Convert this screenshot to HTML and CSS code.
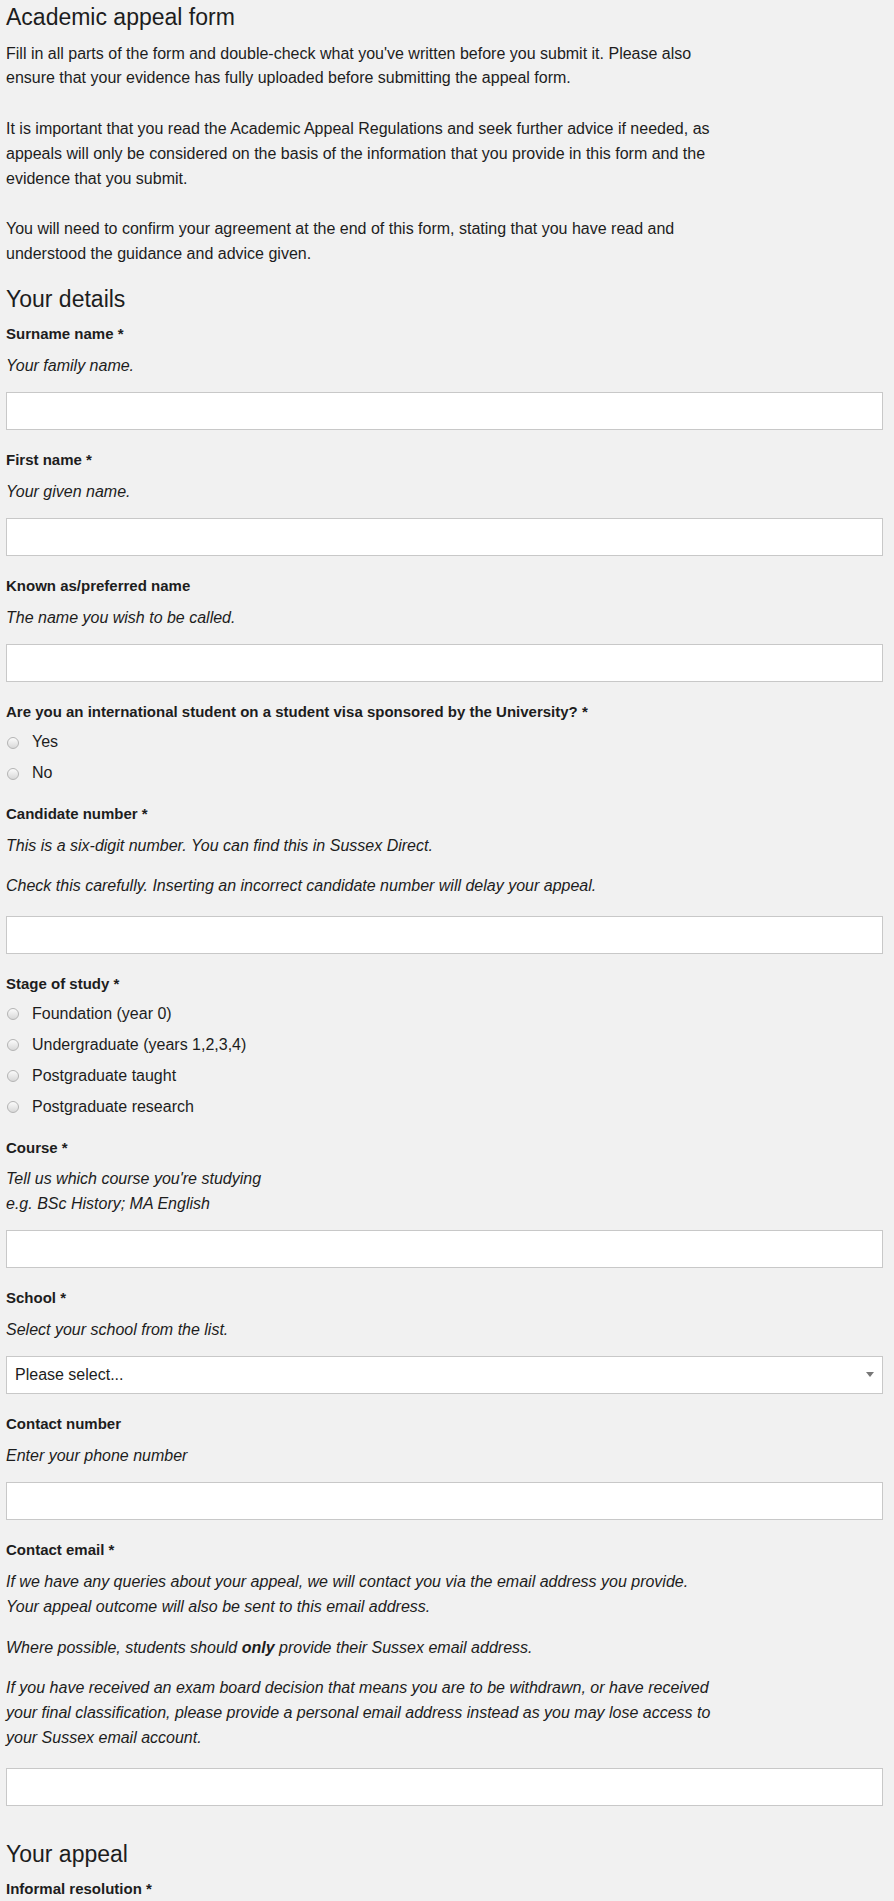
FILE: index.html
```html
<!DOCTYPE html>
<html lang="en">
<head>
  <meta charset="UTF-8">
  <meta name="viewport" content="width=device-width, initial-scale=1.0">
  <title>Academic appeal form</title>
  <link rel="stylesheet" href="styles.css">
</head>
<body>
  <div class="page">
    <h1 class="page-title">Academic appeal form</h1>

    <div class="intro">
      <p>Fill in all parts of the form and double-check what you've written before you submit it. Please also ensure that your evidence has fully uploaded before submitting the appeal form.</p>
      <p>It is important that you read the Academic Appeal Regulations and seek further advice if needed, as appeals will only be considered on the basis of the information that you provide in this form and the evidence that you submit.</p>
      <p>You will need to confirm your agreement at the end of this form, stating that you have read and understood the guidance and advice given.</p>
    </div>

    <section class="form-section">
      <h2 class="section-title">Your details</h2>

      <div class="field">
        <label class="field-label" for="surname">Surname name *</label>
        <p class="hint">Your family name.</p>
        <input class="text-input" type="text" id="surname">
      </div>

      <div class="field">
        <label class="field-label" for="firstname">First name *</label>
        <p class="hint">Your given name.</p>
        <input class="text-input" type="text" id="firstname">
      </div>

      <div class="field">
        <label class="field-label" for="knownas">Known as/preferred name</label>
        <p class="hint">The name you wish to be called.</p>
        <input class="text-input" type="text" id="knownas">
      </div>

      <div class="field field--choice">
        <span class="field-label">Are you an international student on a student visa sponsored by the University? *</span>
        <div class="options">
          <label class="option"><input type="radio" name="visa"> Yes</label>
          <label class="option"><input type="radio" name="visa"> No</label>
        </div>
      </div>

      <div class="field">
        <label class="field-label" for="candidate">Candidate number *</label>
        <div class="hints">
          <p>This is a six-digit number. You can find this in Sussex Direct.</p>
          <p>Check this carefully. Inserting an incorrect candidate number will delay your appeal.</p>
        </div>
        <input class="text-input" type="text" id="candidate">
      </div>

      <div class="field field--choice">
        <span class="field-label">Stage of study *</span>
        <div class="options">
          <label class="option"><input type="radio" name="stage"> Foundation (year 0)</label>
          <label class="option"><input type="radio" name="stage"> Undergraduate (years 1,2,3,4)</label>
          <label class="option"><input type="radio" name="stage"> Postgraduate taught</label>
          <label class="option"><input type="radio" name="stage"> Postgraduate research</label>
        </div>
      </div>

      <div class="field">
        <label class="field-label" for="course">Course *</label>
        <p class="hint">Tell us which course you're studying<br>e.g. BSc History; MA English</p>
        <input class="text-input" type="text" id="course">
      </div>

      <div class="field">
        <label class="field-label" for="school">School *</label>
        <p class="hint">Select your school from the list.</p>
        <div class="select-wrap">
          <select class="text-input select-input" id="school">
            <option>Please select...</option>
          </select>
        </div>
      </div>

      <div class="field">
        <label class="field-label" for="phone">Contact number</label>
        <p class="hint">Enter your phone number</p>
        <input class="text-input" type="text" id="phone">
      </div>

      <div class="field">
        <label class="field-label" for="email">Contact email *</label>
        <div class="hints">
          <p>If we have any queries about your appeal, we will contact you via the email address you provide.<br>Your appeal outcome will also be sent to this email address.</p>
          <p>Where possible, students should <strong>only</strong> provide their Sussex email address.</p>
          <p>If you have received an exam board decision that means you are to be withdrawn, or have received your final classification, please provide a personal email address instead as you may lose access to your Sussex email account.</p>
        </div>
        <input class="text-input" type="text" id="email">
      </div>
    </section>

    <section class="form-section">
      <h2 class="section-title">Your appeal</h2>

      <div class="field field--choice">
        <span class="field-label">Informal resolution *</span>
      </div>
    </section>
  </div>
</body>
</html>
```

FILE: styles.css
```css
body {
  margin: 0;
  background-color: #f1f1f1;
  color: #1d1d1d;
  font-family: "Liberation Sans", Arial, sans-serif;
  font-size: 16px;
  line-height: 24.75px;
}
.page {
  padding: 4px 11px 40px 6px;
}
.page-title,
.section-title {
  font-size: 23px;
  font-weight: normal;
  line-height: 1.2;
  margin: 0;
}
.page-title {
  margin-bottom: 10px;
}
.intro {
  max-width: 720px;
}
.intro p {
  margin: 0 0 26px;
}
.intro p:last-child {
  margin-bottom: 0;
}
.form-section {
  display: flow-root;
}
.section-title {
  margin: 19px 0 9px;
}
.form-section + .form-section .section-title {
  margin-top: 17px;
}
.field {
  margin-bottom: 18px;
}
.field--choice {
  margin-bottom: 16px;
}
.field-label {
  display: block;
  font-size: 15px;
  font-weight: bold;
  line-height: 24.75px;
  margin-bottom: 7px;
}
.field--choice .field-label {
  margin-bottom: 5px;
}
.hint {
  margin: 0 0 13.5px;
  font-style: italic;
  max-width: 720px;
}
.hints {
  margin-bottom: 17px;
  font-style: italic;
  max-width: 720px;
}
.hints p {
  margin: 0;
}
.hints p + p {
  margin-top: 16px;
}
.text-input {
  display: block;
  box-sizing: border-box;
  width: 100%;
  height: 38px;
  margin: 0;
  padding: 0 8px;
  border: 1px solid #c8c8c8;
  border-radius: 0;
  background-color: #fff;
  color: #1d1d1d;
  font: inherit;
}
.select-wrap {
  position: relative;
}
.select-input {
  appearance: none;
  -webkit-appearance: none;
}
.select-wrap::after {
  content: "";
  position: absolute;
  right: 9px;
  top: 16px;
  border-left: 4px solid transparent;
  border-right: 4px solid transparent;
  border-top: 5px solid #777;
  pointer-events: none;
}
.options {
  display: flex;
  flex-direction: column;
  gap: 6.25px;
}
.option {
  display: flex;
  align-items: center;
  line-height: 24.75px;
}
.option input {
  appearance: none;
  -webkit-appearance: none;
  box-sizing: border-box;
  width: 12px;
  height: 12px;
  margin: 0 13px 0 1px;
  border: 1px solid #b4b4b4;
  border-radius: 50%;
  background: linear-gradient(#fbfbfb, #d8d8d8);
}
```
